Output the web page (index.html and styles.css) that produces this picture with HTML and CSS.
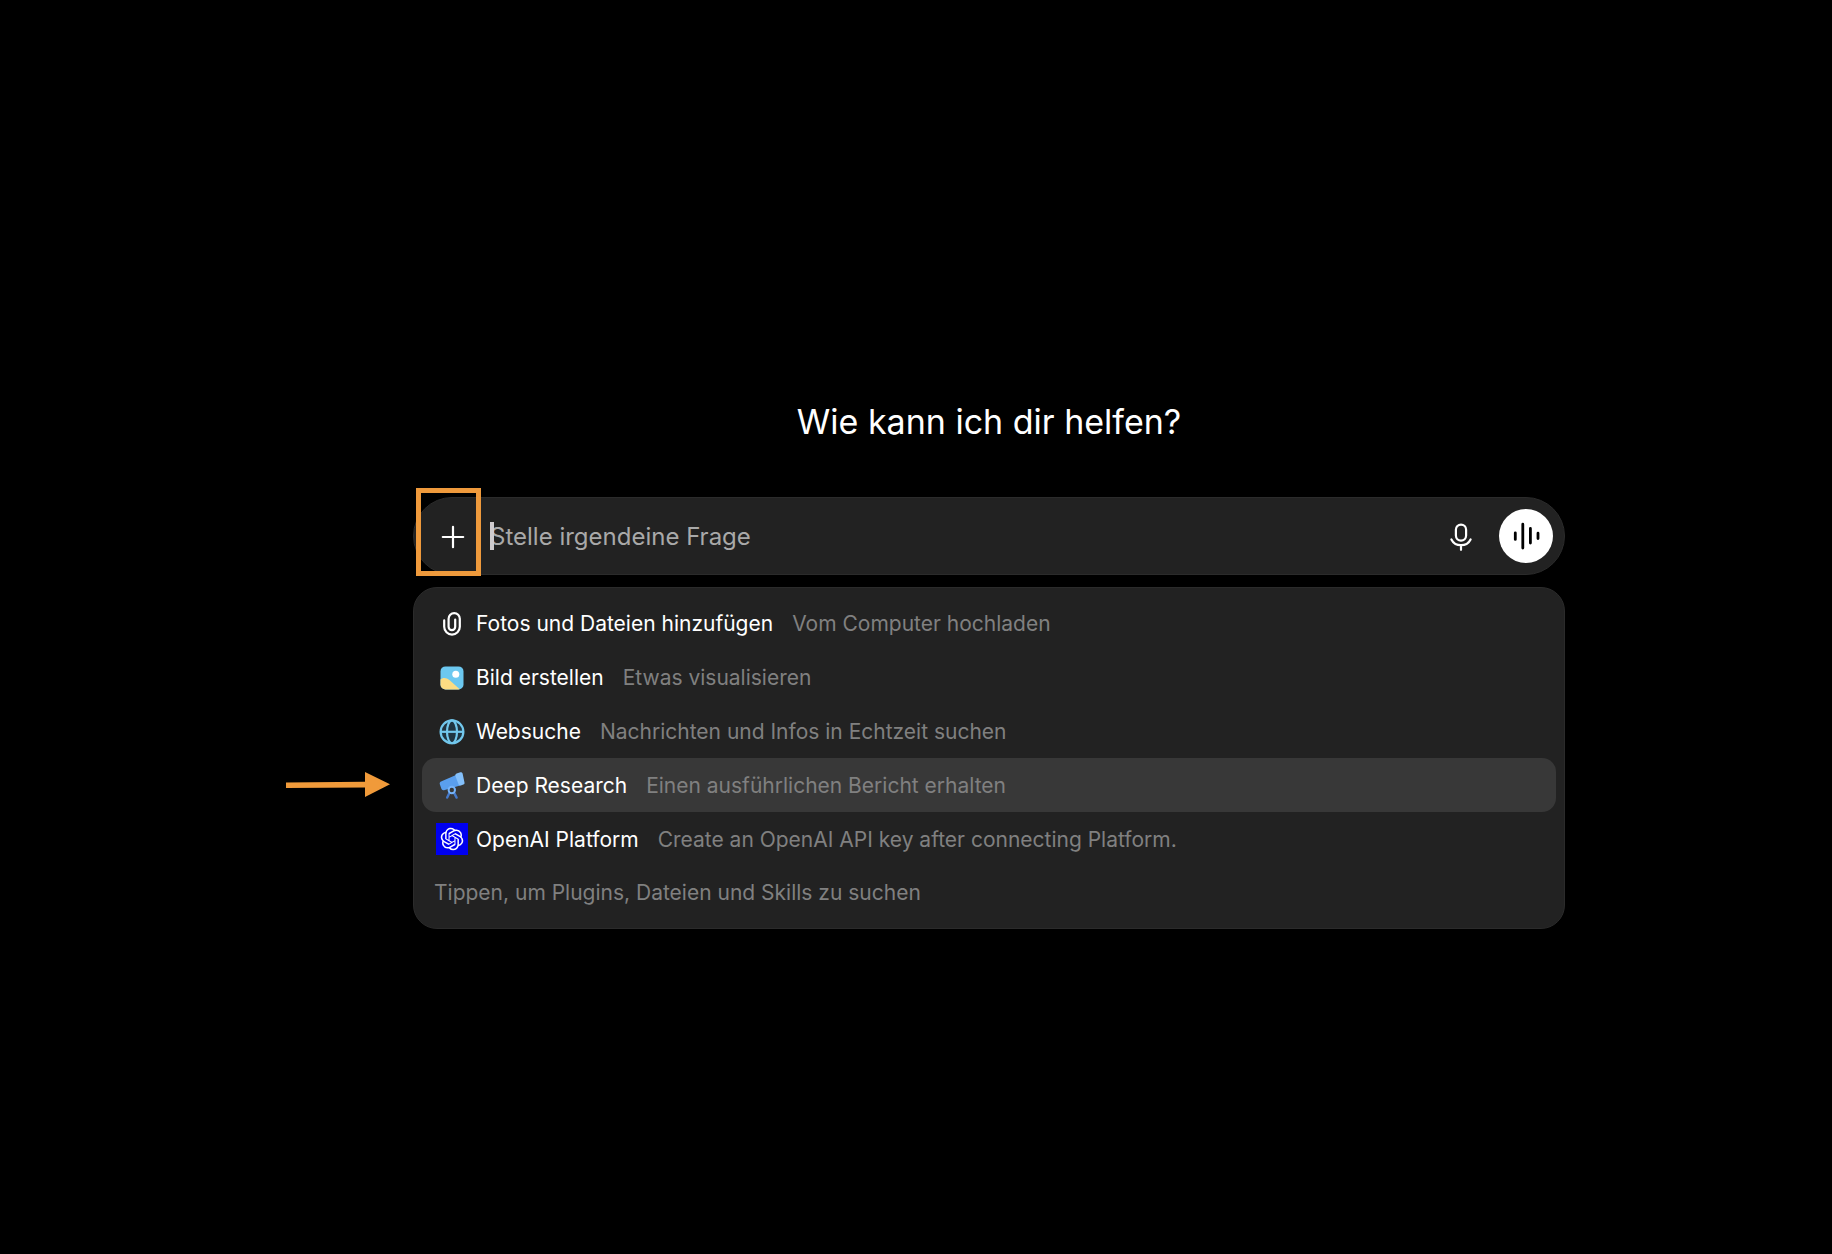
FILE: index.html
```html
<!DOCTYPE html>
<html lang="de">
  <head>
    <meta charset="UTF-8" />
    <meta name="viewport" content="width=device-width, initial-scale=1.0" />
    <title>Wie kann ich dir helfen?</title>
    <link rel="stylesheet" href="styles.css">
  </head>
  <body>
    <main class="chat">
      <h1>Wie kann ich dir helfen?</h1>

      <form class="composer">
        <button type="button" class="icon-button add" aria-label="Hinzufügen">
          <svg width="24" height="24" viewBox="0 0 24 24" fill="none" stroke="#fff" stroke-width="2.2" stroke-linecap="round">
            <path d="M12 1.8v20.4M1.8 12h20.4" />
          </svg>
        </button>
        <div class="prompt">
          <input type="text" aria-label="Frage" placeholder="Stelle irgendeine Frage" />
          <span class="caret"></span>
        </div>
        <button type="button" class="icon-button" aria-label="Diktieren">
          <svg width="28" height="30" viewBox="0 0 28 30" fill="none" stroke="#fff" stroke-width="2.2" stroke-linecap="round">
            <rect x="8.9" y="2.6" width="10.2" height="16" rx="5.1" />
            <path d="M4.4 17.4c1.8 3.6 5.3 5.8 9.6 5.8s7.8-2.2 9.6-5.8M14 23.2v4.6" />
          </svg>
        </button>
        <button type="button" class="voice" aria-label="Sprachmodus">
          <svg width="30" height="30" viewBox="0 0 30 30" fill="none" stroke="#000" stroke-width="2.8" stroke-linecap="round">
            <path d="M4.3 11.8v6.6M11.8 3.2v23.8M19.4 7.4v14.6M27 12.2v5.4" />
          </svg>
        </button>
      </form>

      <div class="menu">
        <ul>
          <li>
            <button type="button" class="item">
              <svg class="icon" viewBox="0 0 32 32" fill="none" stroke="#fff" stroke-width="2.2" stroke-linecap="round">
                <path d="M8.2 13.4v6.4a7.8 7.8 0 0 0 15.6 0v-8a5.6 5.6 0 0 0-11.2 0v8a3.3 3.3 0 0 0 6.6 0v-7.2" />
              </svg>
              <span class="name">Fotos und Dateien hinzufügen</span>
              <span class="hint">Vom Computer hochladen</span>
            </button>
          </li>
          <li>
            <button type="button" class="item">
              <svg class="icon" viewBox="0 0 32 32">
                <clipPath id="frame"><rect x="4.5" y="5.4" width="23" height="23" rx="5" /></clipPath>
                <g clip-path="url(#frame)">
                  <path fill="#6cc8f0" d="M4 5h24v24H4z" />
                  <path fill="#fbdc83" d="M4 18.6c3-2.4 6.6-2 9.4.5L24.6 29H4z" />
                </g>
                <circle cx="19.8" cy="13.2" r="3.5" fill="#fff" />
              </svg>
              <span class="name">Bild erstellen</span>
              <span class="hint">Etwas visualisieren</span>
            </button>
          </li>
          <li>
            <button type="button" class="item">
              <svg class="icon" viewBox="0 0 32 32" fill="none" stroke="#72c7ec" stroke-width="2.2">
                <circle cx="16" cy="16.8" r="11.4" fill="#203440" />
                <ellipse cx="16" cy="16.8" rx="5" ry="11.4" />
                <path d="M4.6 16.8h22.8" />
              </svg>
              <span class="name">Websuche</span>
              <span class="hint">Nachrichten und Infos in Echtzeit suchen</span>
            </button>
          </li>
          <li>
            <button type="button" class="item active">
              <svg class="icon" viewBox="0 0 32 32">
                <path stroke="#4579c9" stroke-width="2.4" stroke-linecap="round" d="M13.6 23.6l-2.4 5M18 23.6l2.6 5" />
                <path fill="#5a9fee" d="M5 12.4L20 6l4 10.4L8 21.2c-1.4.4-2.2-.3-2.7-1.6l-1.4-4.1c-.5-1.5-.1-2.6 1.1-3.1z" />
                <path fill="#84c0fb" d="M20.6 4.6l3.8-1.3c1-.3 1.8.1 2.2 1.1l1.9 9c.2 1-.1 1.7-1.1 2.1l-2.6 1.1c-1.1.4-1.8 0-2.2-1l-3.1-8.4c-.4-1.2 0-2.2 1.1-2.6z" />
                <circle cx="15.8" cy="21" r="3.2" fill="#383838" stroke="#76b4fa" stroke-width="2" />
              </svg>
              <span class="name">Deep Research</span>
              <span class="hint">Einen ausführlichen Bericht erhalten</span>
            </button>
            <svg class="arrow" width="104" height="26" viewBox="0 0 104 26" fill="#f09a3a">
              <path d="M0 10.4l79-.6V0l25 12.3L79 25v-9.6L0 16z" />
            </svg>
          </li>
          <li>
            <button type="button" class="item">
              <svg class="icon platform" viewBox="-5 -5 34 34">
                <path fill="#fff" d="M22.2819 9.8211a5.9847 5.9847 0 0 0-.5157-4.9108 6.0462 6.0462 0 0 0-6.5098-2.9A6.0651 6.0651 0 0 0 4.9807 4.1818a5.9847 5.9847 0 0 0-3.9977 2.9 6.0462 6.0462 0 0 0 .7427 7.0966 5.98 5.98 0 0 0 .511 4.9107 6.051 6.051 0 0 0 6.5146 2.9001A5.9847 5.9847 0 0 0 13.2599 24a6.0557 6.0557 0 0 0 5.7718-4.2058 5.9894 5.9894 0 0 0 3.9977-2.9001 6.0557 6.0557 0 0 0-.7475-7.0729zm-9.022 12.6081a4.4755 4.4755 0 0 1-2.8764-1.0408l.1419-.0804 4.7783-2.7582a.7948.7948 0 0 0 .3927-.6813v-6.7369l2.02 1.1686a.071.071 0 0 1 .038.052v5.5826a4.504 4.504 0 0 1-4.4945 4.4944zm-9.6607-4.1254a4.4708 4.4708 0 0 1-.5346-3.0137l.142.0852 4.783 2.7582a.7712.7712 0 0 0 .7806 0l5.8428-3.3685v2.3324a.0804.0804 0 0 1-.0332.0615L9.74 19.9502a4.4992 4.4992 0 0 1-6.1408-1.6464zM2.3408 7.8956a4.485 4.485 0 0 1 2.3655-1.9728V11.6a.7664.7664 0 0 0 .3879.6765l5.8144 3.3543-2.0201 1.1685a.0757.0757 0 0 1-.071 0l-4.8303-2.7865A4.504 4.504 0 0 1 2.3408 7.872zm16.5963 3.8558L13.1038 8.364 15.1192 7.2a.0757.0757 0 0 1 .071 0l4.8303 2.7913a4.4944 4.4944 0 0 1-.6765 8.1042v-5.6772a.79.79 0 0 0-.407-.667zm2.0107-3.0231l-.142-.0852-4.7735-2.7818a.7759.7759 0 0 0-.7854 0L9.409 9.2297V6.8974a.0662.0662 0 0 1 .0284-.0615l4.8303-2.7866a4.4992 4.4992 0 0 1 6.6802 4.66zM8.3065 12.863l-2.02-1.1638a.0804.0804 0 0 1-.038-.0567V6.0742a4.4992 4.4992 0 0 1 7.3757-3.4537l-.142.0805L8.704 5.459a.7948.7948 0 0 0-.3927.6813zm1.0976-2.3654l2.602-1.4998 2.6069 1.4998v2.9994l-2.5974 1.4997-2.6067-1.4997Z" />
              </svg>
              <span class="name">OpenAI Platform</span>
              <span class="hint">Create an OpenAI API key after connecting Platform.</span>
            </button>
          </li>
        </ul>
        <p class="footer">Tippen, um Plugins, Dateien und Skills zu suchen</p>
      </div>
    </main>
  </body>
</html>
```
FILE: styles.css
```css
* {
  box-sizing: border-box;
}

body {
  margin: 0;
  padding: 32vh 24px 0 170px;
  background-color: #000;
  color: #fff;
  font-family: Inter, "Liberation Sans", sans-serif;
  font-size: 21px;
}

.chat {
  max-width: 1152px;
  margin: 0 auto;
}

h1 {
  margin: 0 0 54px;
  font-size: 34px;
  font-weight: 400;
  line-height: 42px;
  text-align: center;
}

button {
  padding: 0;
  border: none;
  background: none;
  color: inherit;
  font: inherit;
  cursor: pointer;
}

.composer {
  display: flex;
  align-items: center;
  height: 78px;
  padding: 0 11px 0 12px;
  border: 1px solid #2b2b2b;
  border-radius: 39px;
  background-color: #222;
}

.icon-button {
  display: flex;
  align-items: center;
  justify-content: center;
  width: 54px;
  height: 54px;
  padding-top: 2px;
}

.add {
  position: relative;
}

/* marker frame around the plus button */
.add::after {
  content: "";
  position: absolute;
  inset: -21px -1px -13px -10px;
  border: 5px solid #ef9a3c;
}

.prompt {
  position: relative;
  flex: 1;
  margin-left: 10px;
  padding-top: 2px;
}

.prompt input {
  display: block;
  width: 100%;
  padding: 0;
  border: none;
  outline: none;
  background: none;
  color: #fff;
  font: inherit;
  font-size: 24px;
  line-height: 32px;
}

.prompt input::placeholder {
  color: #a9a9a9;
  opacity: 1;
}

.caret {
  position: absolute;
  top: 3px;
  left: 0;
  width: 4px;
  height: 28px;
  background-color: #cfcccf;
}

.voice {
  display: flex;
  align-items: center;
  justify-content: center;
  width: 54px;
  height: 54px;
  margin-left: 11px;
  border-radius: 50%;
  background-color: #fff;
}

.menu {
  margin-top: 12px;
  padding: 8px;
  border: 1px solid #2b2b2b;
  border-radius: 24px;
  background-color: #222;
}

.menu ul {
  margin: 0;
  padding: 0;
  list-style: none;
}

.menu li {
  position: relative;
}

.item {
  display: flex;
  align-items: center;
  width: 100%;
  height: 54px;
  padding: 0 14px;
  border-radius: 14px;
  text-align: left;
}

.item.active {
  background-color: #383838;
}

.icon {
  flex: none;
  width: 32px;
  height: 32px;
  margin-right: 8px;
}

.platform {
  background-color: #0000f0;
}

.hint {
  margin-left: 19px;
  color: #808080;
}

.arrow {
  position: absolute;
  top: 14px;
  right: 100%;
  margin-right: 32px;
}

.footer {
  margin: 0;
  padding: 0 12px;
  color: #808080;
  line-height: 54px;
}
```
